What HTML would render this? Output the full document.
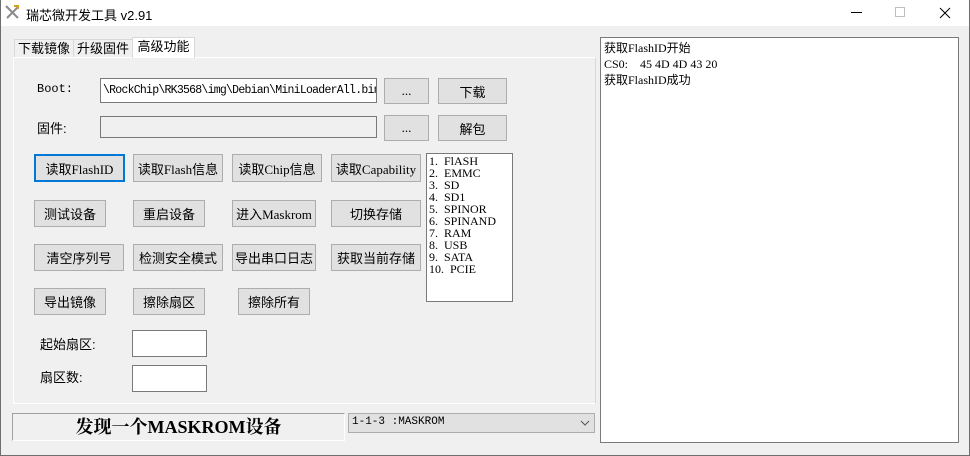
<!DOCTYPE html>
<html><head><meta charset="utf-8"><style>
*{box-sizing:border-box;margin:0;padding:0}
body{width:970px;height:456px;background:#f0f0f0;position:relative;overflow:hidden;font-family:"Liberation Sans","Noto Sans CJK SC",sans-serif;font-size:13px;color:#000}
.a{position:absolute}
.win{left:0;top:0;width:970px;height:456px;border:1px solid #6e6e6e;border-top:none}
.title{left:0;top:0;width:970px;height:26px;background:#fff}
.btn{position:absolute;background:#e1e1e1;border:1px solid #adadad;display:flex;align-items:center;justify-content:center;font-size:13px;font-family:"Liberation Serif","Noto Sans CJK SC",serif;white-space:nowrap}
.box{position:absolute;background:#fff;border:1px solid #7a7a7a}
.m{font-family:"Liberation Mono","Noto Sans CJK SC",monospace;font-size:12px}
.tab{position:absolute;border:1px solid #d9d9d9;border-bottom:none;font-size:13px;text-align:center;line-height:18px}
</style></head><body>
<div class="a title"></div>
<div class="a win"></div>
<svg class="a" style="left:4px;top:4px" width="16" height="16"><path d="M2 2L14 14M14 3L3 14" stroke="#8a8a8a" stroke-width="2"/><path d="M10 2l4 0 0 3" stroke="#d4a020" stroke-width="2" fill="none"/></svg>
<div class="a" style="left:26px;top:5px;font-size:13px">瑞芯微开发工具 v2.91</div>
<div class="a" style="left:851px;top:12px;width:11px;height:1px;background:#000"></div>
<div class="a" style="left:895px;top:7px;width:10px;height:10px;border:1px solid #c0c0c0"></div>
<svg class="a" style="left:939px;top:7px" width="12" height="12"><path d="M1 1L11 11M11 1L1 11" stroke="#000" stroke-width="1"/></svg>

<div class="tab" style="left:14px;top:39px;width:60px;height:19px">下载镜像</div>
<div class="tab" style="left:73px;top:39px;width:60px;height:19px">升级固件</div>
<div class="tab" style="left:132px;top:37px;width:63px;height:21px;background:#fff;border-color:#d9d9d9;z-index:2">高级功能</div>
<div class="a" style="left:13px;top:57px;width:583px;height:347px;border:1px solid #fff;border-right-color:#d9d9d9;border-bottom-color:#fff;background:#f0f0f0"></div>

<div class="a m" style="left:37px;top:82px">Boot:</div>
<div class="box m" style="left:100px;top:78px;width:277px;height:25px;padding:5px 0 0 2px;overflow:hidden;white-space:nowrap;font-size:11.5px;letter-spacing:-0.75px">\RockChip\RK3568\img\Debian\MiniLoaderAll.bin</div>
<div class="btn" style="left:384px;top:78px;width:45px;height:26px">...</div>
<div class="btn" style="left:438px;top:78px;width:69px;height:26px">下载</div>
<div class="a" style="left:37px;top:118px">固件:</div>
<div class="box" style="left:100px;top:116px;width:277px;height:22px;background:#f0f0f0"></div>
<div class="btn" style="left:384px;top:115px;width:45px;height:26px">...</div>
<div class="btn" style="left:438px;top:115px;width:69px;height:26px">解包</div>

<div class="btn" style="left:34px;top:154px;width:91px;height:28px;border:2px solid #0078d7">读取FlashID</div>
<div class="btn" style="left:133px;top:154px;width:90px;height:28px">读取Flash信息</div>
<div class="btn" style="left:232px;top:154px;width:90px;height:28px">读取Chip信息</div>
<div class="btn" style="left:331px;top:154px;width:90px;height:28px">读取Capability</div>

<div class="btn" style="left:34px;top:200px;width:72px;height:27px">测试设备</div>
<div class="btn" style="left:133px;top:200px;width:72px;height:27px">重启设备</div>
<div class="btn" style="left:232px;top:200px;width:84px;height:27px">进入Maskrom</div>
<div class="btn" style="left:331px;top:200px;width:90px;height:27px">切换存储</div>

<div class="btn" style="left:34px;top:244px;width:90px;height:27px">清空序列号</div>
<div class="btn" style="left:133px;top:244px;width:90px;height:27px">检测安全模式</div>
<div class="btn" style="left:232px;top:244px;width:84px;height:27px">导出串口日志</div>
<div class="btn" style="left:331px;top:244px;width:90px;height:27px">获取当前存储</div>

<div class="btn" style="left:34px;top:288px;width:72px;height:27px">导出镜像</div>
<div class="btn" style="left:133px;top:288px;width:72px;height:27px">擦除扇区</div>
<div class="btn" style="left:238px;top:288px;width:72px;height:27px">擦除所有</div>

<div class="box m" style="left:426px;top:153px;width:87px;height:149px;padding:1px 0 0 2px;line-height:12px;font-size:12px;white-space:pre;font-family:'Liberation Serif',serif">1.  FlASH
2.  EMMC
3.  SD
4.  SD1
5.  SPINOR
6.  SPINAND
7.  RAM
8.  USB
9.  SATA
10.  PCIE</div>

<div class="a" style="left:40px;top:334px">起始扇区:</div>
<div class="box" style="left:132px;top:330px;width:75px;height:27px"></div>
<div class="a" style="left:40px;top:367px">扇区数:</div>
<div class="box" style="left:132px;top:365px;width:75px;height:27px"></div>

<div class="a" style="left:12px;top:413px;width:333px;height:28px;border:1px solid #a0a0a0;border-right-color:#fff;border-bottom-color:#fff;text-align:center;font-family:'Liberation Serif','Noto Serif CJK SC',serif;font-weight:bold;font-size:18px;line-height:26px">发现一个MASKROM设备</div>
<div class="a m" style="left:348px;top:413px;width:247px;height:20px;background:#e1e1e1;border:1px solid #adadad;font-size:11px;padding:2px 0 0 3px">1-1-3 :MASKROM</div>
<svg class="a" style="left:580px;top:419px" width="10" height="8"><path d="M1 2L5 6L9 2" stroke="#555" fill="none"/></svg>

<div class="box" style="left:600px;top:37px;width:359px;height:406px;padding:2px 0 0 3px;line-height:16px;font-size:12px;font-family:'Liberation Serif','Noto Sans CJK SC',serif;white-space:pre">获取FlashID开始
CS0:    45 4D 4D 43 20
获取FlashID成功</div>
</body></html>
